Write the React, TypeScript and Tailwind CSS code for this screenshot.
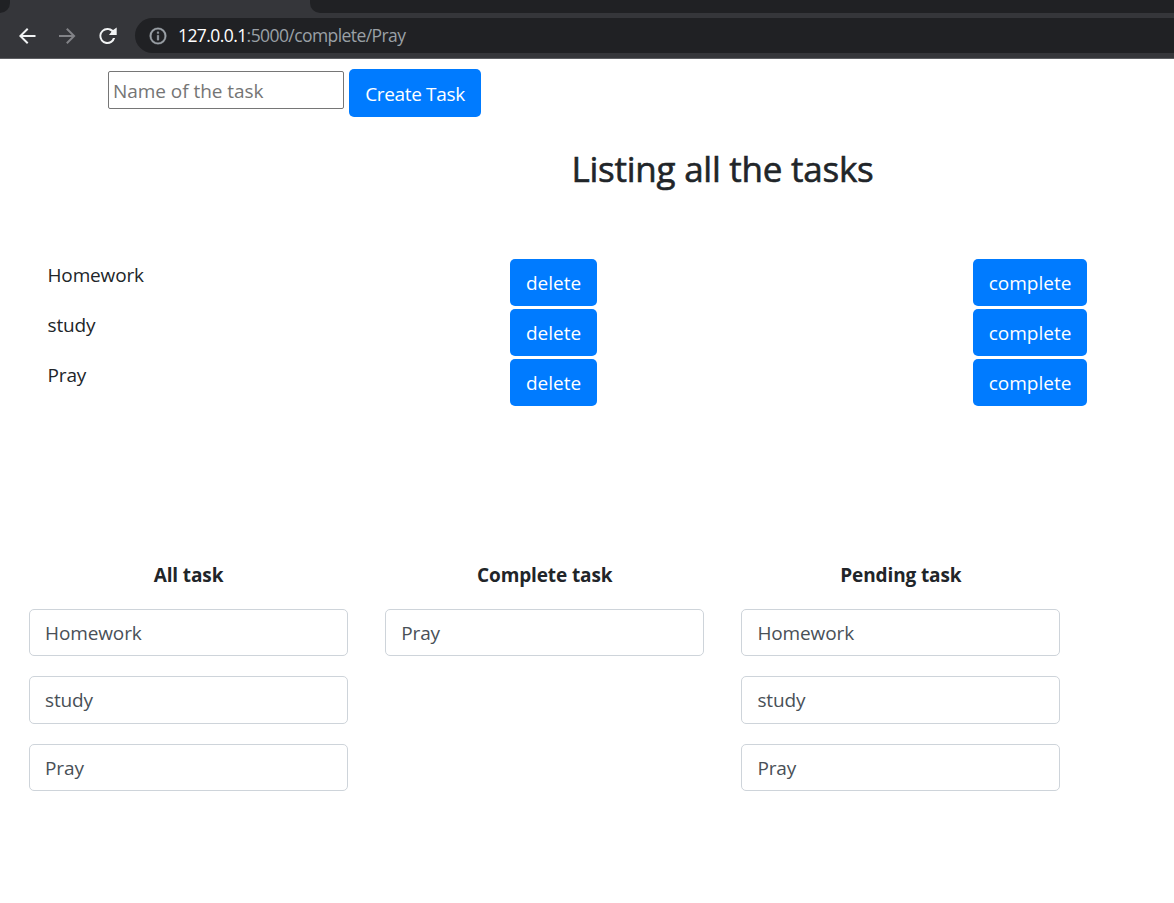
const tasks = ["Homework", "study", "Pray"];

const columns = [
  { title: "All task", items: ["Homework", "study", "Pray"] },
  { title: "Complete task", items: ["Pray"] },
  { title: "Pending task", items: ["Homework", "study", "Pray"] },
];

function BrowserBar() {
  return (
    <header className="h-[59px] border-b border-[#5d5e62] bg-[#35363a]">
      <div className="flex h-[13px] justify-between">
        <div className="w-[10px] rounded-br-[10px] bg-[#202124]" />
        <div className="w-[864px] rounded-bl-[10px] bg-[#202124]" />
      </div>
      <div className="flex h-[45px] items-center">
        <svg className="ml-[15px] size-6 shrink-0 fill-[#f1f3f4]" viewBox="0 0 24 24">
          <path d="M20.5 11H7.83l5.59-5.59L12 4l-8 8 8 8 1.41-1.41L7.83 13H20.5v-2z" />
        </svg>
        <svg className="ml-4 size-6 shrink-0 fill-[#828387]" viewBox="0 0 24 24">
          <path d="M12.5 4l-1.41 1.41L16.67 11H4v2h12.67l-5.58 5.59L12.5 20l8-8z" />
        </svg>
        <svg className="ml-4 size-6 shrink-0 fill-[#f1f3f4]" viewBox="0 0 24 24">
          <path d="M18.1 6.1A8.1 8.1 0 0 0 12.3 4a8 8 0 1 0 7.83 10h-2.2A6 6 0 1 1 12.3 6c1.66 0 3.14.5 4.22 1.7L14 11h7.7V3.6z" />
        </svg>
        <div className="ml-4 flex h-[35px] flex-1 items-center rounded-l-full bg-[#202124] pl-3">
          <svg className="ml-[0.5px] size-5 shrink-0 fill-[#9aa0a6] stroke-[#9aa0a6] stroke-[0.4]" viewBox="0 0 24 24">
            <path d="M11 17h2v-6h-2v6zm1-15a10 10 0 1 0 0 20 10 10 0 0 0 0-20zm0 18a8 8 0 1 1 0-16 8 8 0 0 1 0 16zM11 9h2V7h-2v2z" />
          </svg>
          <span className="ml-[10.5px] text-[17.5px] leading-none tracking-[-0.58px] text-[#9aa0a6]">
            <span className="text-white">127.0.0.1</span>:5000/complete/Pray
          </span>
        </div>
      </div>
    </header>
  );
}

function Button({ label, className }: { label: string; className: string }) {
  return (
    <button className={`rounded-[5px] bg-[#007bff] pt-[2px] text-center text-[19px] text-white ${className}`}>
      {label}
    </button>
  );
}

export default function App() {
  return (
    <div className="min-h-[903px] overflow-hidden bg-white font-['Open_Sans','Noto_Sans',sans-serif] text-[19px] text-[#212529]">
      <BrowserBar />
      <main>
        <form className="flex pt-[10px] pl-[108px]">
          <input
            className="mt-[2px] h-[38px] w-[236px] rounded-[2px] border border-[#767676] px-1 pt-[2px] tracking-[-0.05px] placeholder:text-[#757575]"
            placeholder="Name of the task"
          />
          <Button label="Create Task" className="ml-[5px] h-12 w-[132px] tracking-[-0.35px]" />
        </form>
        <h2 className="mt-[29px] mb-[68px] ml-[271px] text-center text-[35px] leading-[45px] font-medium tracking-[-0.25px] [-webkit-text-stroke:0.6px_#212529]">
          Listing all the tasks
        </h2>
        <div className="flex flex-col gap-[3px]">
          {tasks.map((task) => (
            <div key={task} className="flex h-[47px]">
              <div className="w-[510px] pl-[47.5px] leading-[33px] tracking-[-0.15px]">{task}</div>
              <div className="w-[463px]">
                <Button label="delete" className="h-[47px] w-[87px]" />
              </div>
              <Button label="complete" className="h-[47px] w-[114px]" />
            </div>
          ))}
        </div>
        <div className="mt-[154px] flex gap-[37.2px] pl-[29px]">
          {columns.map((column) => (
            <section key={column.title} className="w-[319px]">
              <h3 className="text-center leading-[30px] font-bold tracking-[-0.12px]">{column.title}</h3>
              <div className="mt-[19px] flex flex-col gap-5">
                {column.items.map((item) => (
                  <div
                    key={item}
                    className="h-[47.45px] rounded-[5px] border border-[#ced4da] px-[15px] leading-[46px] tracking-[-0.12px] text-[#495057]"
                  >
                    {item}
                  </div>
                ))}
              </div>
            </section>
          ))}
        </div>
      </main>
    </div>
  );
}
